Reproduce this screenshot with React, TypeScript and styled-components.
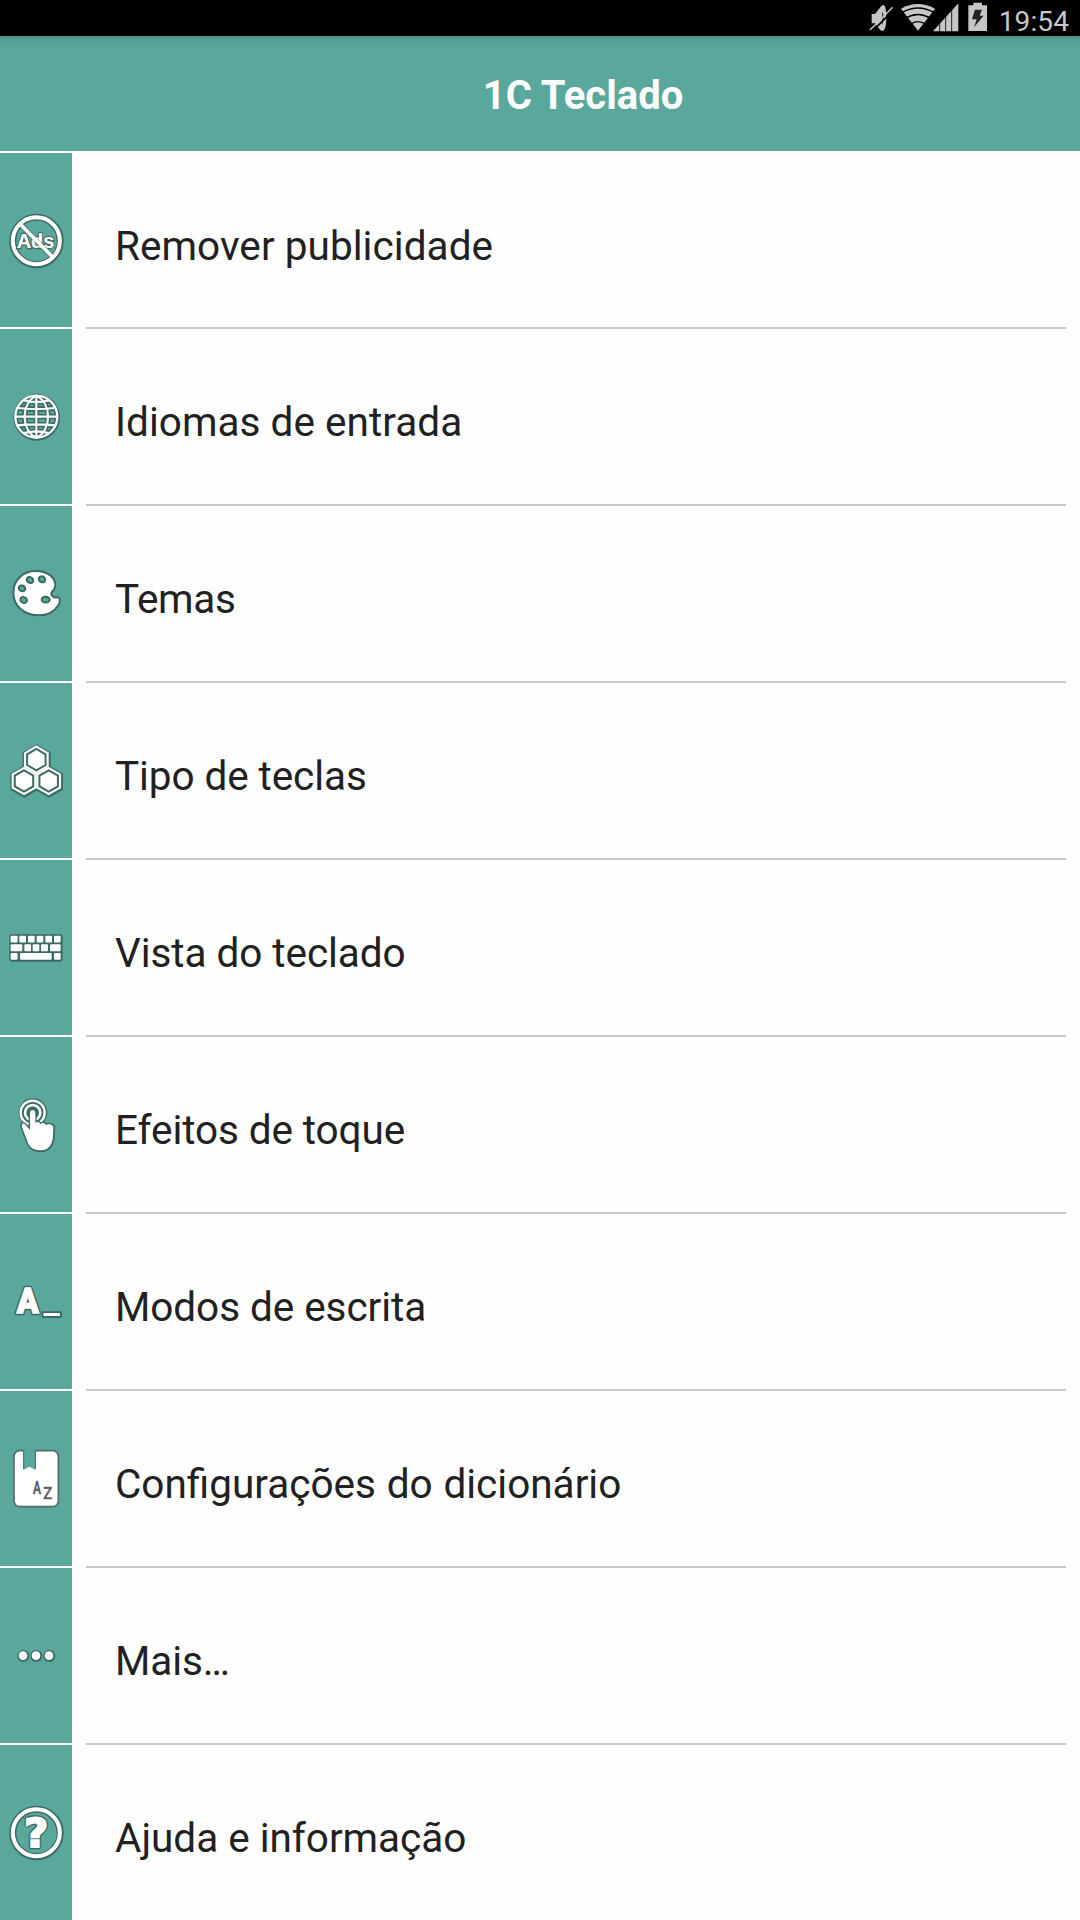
import React from "react";
import styled, { createGlobalStyle } from "styled-components";

const TEAL = "#5aa89b";
const EDGE = "#3b6a62";

const GlobalStyle = createGlobalStyle`
  html, body { margin: 0; padding: 0; background: #fefefe; }
  body { font-family: Roboto, "Noto Sans", sans-serif; overflow: hidden; }
`;

const Screen = styled.main`
  width: 1080px;
  height: 1920px;
  display: flex;
  flex-direction: column;
  overflow: hidden;
  background: #fefefe;
`;

const StatusBar = styled.div`
  flex: none;
  height: 36px;
  box-sizing: border-box;
  padding-right: 11px;
  display: flex;
  justify-content: flex-end;
  align-items: flex-start;
  background: #000;
  color: #c6c6c6;
`;

const StatusIcon = styled.svg<{ $gap: number }>`
  display: block;
  height: 36px;
  margin-right: ${(p) => p.$gap}px;
`;

const Clock = styled.span`
  font-size: 28px;
  line-height: 43px;
  letter-spacing: 0.1px;
`;

const Header = styled.header`
  flex: none;
  height: 115px;
  box-sizing: border-box;
  padding: 4px 0 0 86px;
  display: flex;
  align-items: center;
  justify-content: center;
  background: linear-gradient(#4f8e84 0, #57a195 4px, ${TEAL} 14px);
`;

const Title = styled.h1`
  margin: 0;
  font-size: 40px;
  line-height: 48px;
  font-weight: 700;
  color: #fff;
`;

const List = styled.ul`
  flex: 1;
  margin: 0;
  padding: 2px 0 0;
  list-style: none;
`;

const Row = styled.li<{ $first: boolean }>`
  display: flex;
  height: ${(p) => (p.$first ? 176 : 177)}px;
`;

const IconCell = styled.div`
  flex: none;
  width: 72px;
  box-sizing: border-box;
  padding-top: 60px;
  background: ${TEAL};
  border-bottom: 2px solid #fff;
`;

const Glyph = styled.svg`
  display: block;
  width: 72px;
  height: 55px;
  overflow: visible;
`;

const LabelCell = styled.div`
  flex: 1;
  box-sizing: border-box;
  margin: 0 14px 0 14px;
  padding: 69px 0 0 29px;
  border-bottom: 2px solid #c9c9c9;
`;

const Label = styled.span<{ $spacing: number; $word: number }>`
  display: block;
  font-size: 40.5px;
  line-height: 48px;
  letter-spacing: ${(p) => (p.$spacing ? `${p.$spacing}px` : "normal")};
  word-spacing: ${(p) => p.$word}px;
  white-space: nowrap;
  color: #212121;
`;

/* Ring with a dark rim on both sides */
const Ring = () => (
  <>
    <circle cx="109.5" cy="84" r="71" fill="none" stroke={EDGE} strokeWidth="21" />
    <circle cx="109" cy="83" r="70.5" fill="none" stroke="#fff" strokeWidth="12" />
  </>
);

const NoAds = () => (
  <>
    <Ring />
    <text
      x="50" y="104" fontFamily="Liberation Sans, Arial, sans-serif" fontWeight="700" fontSize="60"
      textLength="113" fill="#fff" stroke={EDGE} strokeWidth="7" paintOrder="stroke"
    >
      Ads
    </text>
    <path d="M64 37 155 129" stroke={EDGE} strokeWidth="15" />
    <text
      x="50" y="104" fontFamily="Liberation Sans, Arial, sans-serif" fontWeight="700" fontSize="60"
      textLength="113" fill="#fff" aria-hidden="true" opacity="0.55"
    >
      Ads
    </text>
    <path d="M58 31 160 134" stroke="#fff" strokeWidth="11" />
  </>
);

const globeLines =
  "M109 19V147M109 19C62 45 62 121 109 147M109 19C156 45 156 121 109 147M45 83H173M53 57Q109 63 165 57M53 109Q109 103 165 109M72 34Q109 44 146 34M72 132Q109 122 146 132";

const Globe = () => (
  <>
    <circle cx="110" cy="85" r="70" fill={EDGE} />
    <circle cx="109" cy="83" r="62" fill={TEAL} />
    <path d={globeLines} fill="none" stroke={EDGE} strokeWidth="16" />
    <circle cx="109" cy="83" r="58" fill="none" stroke={EDGE} strokeWidth="7" />
    <circle cx="109" cy="83" r="63" fill="none" stroke="#fff" strokeWidth="7" />
    <path d={globeLines} fill="none" stroke="#fff" strokeWidth="6.5" />
  </>
);

const holes = [
  [90, 42, 30], [126, 40, 30], [66, 67, 25], [71, 102, 20], [137, 101, 0],
];

const Palette = () => (
  <>
    <path
      d="M107 15C68 15 40 43 40 80C40 120 72 148 117 148C145 148 165 134 176 116C183 103 180 93 170 94C162 96 152 89 154 81C157 75 166 72 166 58C166 34 143 15 107 15Z"
      fill="#fff" stroke={EDGE} strokeWidth="6" strokeLinejoin="round"
    />
    {holes.map(([x, y, a]) => (
      <ellipse
        key={`${x}-${y}`} cx={x} cy={y} rx={x === 137 ? 12 : 10} ry="8.5"
        transform={`rotate(${a} ${x} ${y})`} fill={TEAL} stroke={EDGE} strokeWidth="6"
      />
    ))}
  </>
);

const hex = (cx: number, cy: number, r: number) =>
  [0, 1, 2, 3, 4, 5]
    .map((i) => {
      const a = (Math.PI / 3) * i - Math.PI / 2;
      return `${(cx + r * Math.cos(a)).toFixed(1)},${(cy + r * Math.sin(a)).toFixed(1)}`;
    })
    .join(" ");

const cells = [[109, 50], [72, 114], [146, 114]];

const Honeycomb = () => (
  <>
    {cells.map(([x, y]) => (
      <polygon key={x} points={hex(x + 1, y + 2, 45)} fill={EDGE} stroke={EDGE} strokeWidth="6" />
    ))}
    {cells.map(([x, y]) => (
      <polygon key={x} points={hex(x, y, 43)} fill="#fff" />
    ))}
    {cells.map(([x, y]) => (
      <polygon key={x} points={hex(x, y, 32)} fill="#fff" stroke={EDGE} strokeWidth="6" />
    ))}
  </>
);

const keys = [
  [32, 47, 21], [58, 47, 20], [84, 47, 20], [110, 47, 20], [136, 47, 20], [162, 47, 20],
  [32, 73, 35], [73, 73, 20], [98, 73, 20], [123, 73, 21], [150, 73, 32],
  [32, 99, 21], [60, 99, 95], [162, 99, 20],
];

const Keyboard = () => (
  <>
    <rect x="28" y="43" width="160" height="82" rx="7" fill={EDGE} />
    {keys.map(([x, y, w]) => (
      <rect key={`${x}-${y}`} x={x} y={y} width={w} height="20.5" rx="3" fill="#fff" />
    ))}
  </>
);

const handPath =
  "M90 47C90 36 106 36 106 47V78C110 73 119 75 121 82C125 76 136 77 138 85C143 79 160 82 160 90L159 116C158 142 146 159 124 160C104 161 91 153 84 138L66 91C63 80 72 76 77 84L90 99Z";

const Touch = () => (
  <>
    <circle cx="99" cy="47" r="43" fill={EDGE} />
    <path d={handPath} fill={EDGE} stroke={EDGE} strokeWidth="9" strokeLinejoin="round" transform="translate(1 1)" />
    <circle cx="98" cy="47" r="36" fill="none" stroke="#fff" strokeWidth="7.5" />
    <circle cx="98" cy="47" r="23" fill={TEAL} stroke="#fff" strokeWidth="7.5" />
    <circle cx="98" cy="47" r="18" fill={EDGE} />
    <path d={handPath} fill={EDGE} stroke={EDGE} strokeWidth="8" strokeLinejoin="round" />
    <path d={handPath} fill="#fff" />
  </>
);

const Caps = () => (
  <>
    <text
      x="50" y="117" fontFamily="Roboto, sans-serif" fontWeight="900" fontSize="107"
      textLength="66" lengthAdjust="spacingAndGlyphs"
      fill={EDGE} stroke={EDGE} strokeWidth="14" strokeLinejoin="round" aria-hidden="true"
    >
      A
    </text>
    <text
      x="50" y="117" fontFamily="Roboto, sans-serif" fontWeight="900" fontSize="107"
      textLength="66" lengthAdjust="spacingAndGlyphs"
      fill="#fff" stroke="#fff" strokeWidth="4"
    >
      A
    </text>
    <rect x="125" y="112" width="61" height="20" rx="5" fill={EDGE} />
    <rect x="130" y="117" width="50" height="9" rx="2" fill="#fff" />
  </>
);

const Dictionary = () => (
  <>
    <rect x="42" y="-1" width="133" height="168" rx="17" fill="#fff" stroke="#536a66" strokeWidth="5" />
    <path d="M71 -4H106V56L88 47L71 56Z" fill={TEAL} />
    <path d="M71 -3V55M106 -3V55" stroke="#4f7c74" strokeWidth="4" />
    <text
      x="99" y="130" fontFamily="Roboto, sans-serif" fontWeight="500" fontSize="54"
      textLength="24" lengthAdjust="spacingAndGlyphs" fill="#5c5c5c" stroke="#5c5c5c" strokeWidth="1.5"
    >
      A
    </text>
    <text
      x="130" y="145" fontFamily="Roboto, sans-serif" fontWeight="500" fontSize="50"
      textLength="27" lengthAdjust="spacingAndGlyphs" fill="#5c5c5c" stroke="#5c5c5c" strokeWidth="1"
    >
      Z
    </text>
  </>
);

const More = () => (
  <>
    {[70, 109, 148].map((x) => (
      <circle key={x} cx={x} cy="84" r="18" fill={EDGE} />
    ))}
    {[69, 108, 147].map((x) => (
      <circle key={x} cx={x} cy="83" r="13" fill="#fff" />
    ))}
  </>
);

const Help = () => (
  <>
    <Ring />
    <text
      x="73" y="127" fontFamily="DejaVu Sans, sans-serif" fontWeight="700" fontSize="118"
      textLength="72" lengthAdjust="spacingAndGlyphs"
      fill={EDGE} stroke={EDGE} strokeWidth="14" strokeLinejoin="round" aria-hidden="true"
    >
      ?
    </text>
    <text
      x="73" y="127" fontFamily="DejaVu Sans, sans-serif" fontWeight="700" fontSize="118"
      textLength="72" lengthAdjust="spacingAndGlyphs"
      fill="#fff" stroke="#fff" strokeWidth="6"
    >
      ?
    </text>
  </>
);

interface Item {
  label: string;
  Icon: React.FC;
  spacing?: number;
  word?: number;
}

const items: Item[] = [
  { label: "Remover publicidade", Icon: NoAds, spacing: 0.05 },
  { label: "Idiomas de entrada", Icon: Globe, spacing: 0.04 },
  { label: "Temas", Icon: Palette, spacing: -0.3 },
  { label: "Tipo de teclas", Icon: Honeycomb, spacing: -0.09 },
  { label: "Vista do teclado", Icon: Keyboard, spacing: -0.06 },
  { label: "Efeitos de toque", Icon: Touch, spacing: -0.1 },
  { label: "Modos de escrita", Icon: Caps, spacing: -0.06 },
  { label: "Configurações do dicionário", Icon: Dictionary, word: 0.7 },
  { label: "Mais…", Icon: More, spacing: -0.1 },
  { label: "Ajuda e informação", Icon: Help, spacing: -0.03 },
];

const App: React.FC = () => (
  <>
    <GlobalStyle />
    <Screen>
      <StatusBar>
        <StatusIcon $gap={7} width="25" viewBox="30 0 75 108" fill="#c6c6c6">
          <path d="M38 42H48L64 22C74 8 82 14 82 53C82 90 72 100 62 88L48 70H38Z" />
          <path d="M70 34Q78 52 70 76Z" fill="#000" />
          <path d="M37 97 105 29" stroke="#000" strokeWidth="5" />
          <path d="M33 90 101 22" stroke="#c6c6c6" strokeWidth="4.5" />
        </StatusIcon>
        <StatusIcon $gap={-2} width="34" viewBox="125 0 102 108" fill="#c6c6c6">
          <path d="M176 92 125 26Q176 -2 227 26Z" />
          <path d="M127 38Q176 10 225 38M138 55Q176 32 214 55M152 73Q176 57 200 73" fill="none" stroke="#000" strokeWidth="4" />
        </StatusIcon>
        <StatusIcon $gap={9} width="26" viewBox="220 0 78 108" fill="#c6c6c6">
          <path d="M220 94 296 10V94Z" />
          <path d="M240 60V96M258 40V96M276 20V96" stroke="#000" strokeWidth="2.5" />
        </StatusIcon>
        <StatusIcon $gap={12} width="19" viewBox="324 0 57 108" fill="#c6c6c6">
          <path d="M325 16H340V8H366V16H381V93H325Z" />
          <path d="M345 29H366L359 47H371L342 82L350 58H336Z" fill="#222" />
        </StatusIcon>
        <Clock>19:54</Clock>
      </StatusBar>
      <Header>
        <Title>1C Teclado</Title>
      </Header>
      <List>
        {items.map(({ label, Icon, spacing = 0, word = 0 }, i) => (
          <Row key={label} $first={i === 0}>
            <IconCell>
              <Glyph viewBox="0 0 216 165">
                <Icon />
              </Glyph>
            </IconCell>
            <LabelCell>
              <Label $spacing={spacing} $word={word}>
                {label}
              </Label>
            </LabelCell>
          </Row>
        ))}
      </List>
    </Screen>
  </>
);

export default App;
